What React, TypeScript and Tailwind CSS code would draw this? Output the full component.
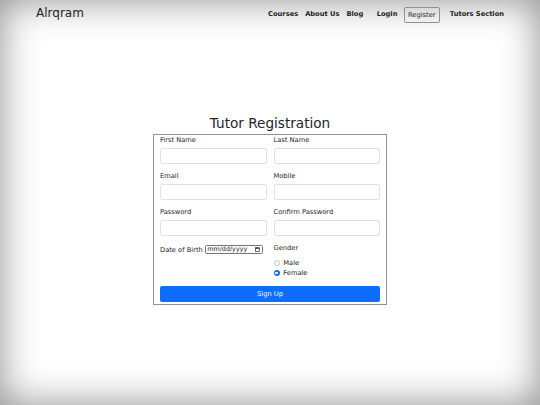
import React from "react";

const font = { fontFamily: '"DejaVu Sans", "Noto Sans", sans-serif' };

function Field({ label }: { label: string }) {
  return (
    <div className="flex flex-col">
      <div className="text-[6.7px] leading-[10px] text-[#212529]">{label}</div>
      <div className="mt-[3px] h-[16px] rounded-[2px] border border-[#dee2e6] bg-white" />
      <div className="h-[7px]" />
    </div>
  );
}

export default function App() {
  return (
    <div
      className="relative h-[405px] w-[540px] overflow-hidden bg-white text-[#212529] shadow-[inset_0_0_38px_rgba(0,0,0,0.45)]"
      style={font}
    >
      {/* Navbar */}
      <div className="flex h-[28px] items-start justify-between pl-[36px] pr-[36px]">
        <div className="text-[12px] leading-[26px] text-[#212529]">Alrqram</div>
        <div className="flex items-start text-[6.7px] font-bold text-[#212529]">
          <span className="mt-[9px] leading-[10px]">Courses</span>
          <span className="ml-[7px] mt-[9px] leading-[10px]">About Us</span>
          <span className="ml-[7px] mt-[9px] leading-[10px]">Blog</span>
          <span className="ml-[13.5px] mt-[9px] leading-[10px]">Login</span>
          <span className="ml-[6.6px] mt-[7px] h-[16px] rounded-[2px] border border-[#8f8f8f] px-[3px] font-normal leading-[14px]">
            Register
          </span>
          <span className="ml-[10.3px] mt-[9px] leading-[10px]">Tutors Section</span>
        </div>
      </div>

      {/* Title */}
      <div className="mt-[87px] text-center text-[13.6px] leading-[17px] text-[#212529]">
        Tutor Registration
      </div>

      {/* Form box */}
      <div className="mx-auto mt-[2px] w-[234px] border border-[#939393] px-[6px] pb-[2px]">
        <div className="grid grid-cols-2 gap-x-[7px]">
          <Field label="First Name" />
          <Field label="Last Name" />
          <Field label="Email" />
          <Field label="Mobile" />
          <Field label="Password" />
          <Field label="Confirm Password" />
          <div className="flex h-[13px] items-center text-[6.7px]">
            <span className="leading-[10px]">Date of Birth</span>
            <div className="ml-[2px] flex h-[9.5px] w-[58px] items-center justify-between rounded-[1.5px] border border-[#767676] bg-white pl-[1.5px] pr-[1.5px]">
              <span className="text-[6.4px] leading-[7px] text-[#212529]">mm/dd/yyyy</span>
              <svg width="5" height="5" viewBox="0 0 10 10">
                <rect x="1" y="1.5" width="8" height="7.5" fill="none" stroke="#222" strokeWidth="1.3" />
                <rect x="1" y="1.5" width="8" height="2" fill="#222" />
              </svg>
            </div>
          </div>
          <div className="flex flex-col text-[6.7px]">
            <div className="leading-[10px]">Gender</div>
            <div className="mt-[4.5px] flex h-[10.5px] items-center">
              <span className="h-[6.3px] w-[6.3px] rounded-full border border-[#c8c8c8] bg-white" />
              <span className="ml-[3.5px] leading-[10px]">Male</span>
            </div>
            <div className="flex h-[10.5px] items-center">
              <span className="flex h-[6.3px] w-[6.3px] items-center justify-center rounded-full bg-[#0d6efd]">
                <span className="h-[2.4px] w-[2.4px] rounded-full bg-white" />
              </span>
              <span className="ml-[3.5px] leading-[10px]">Female</span>
            </div>
          </div>
        </div>
        <div className="mt-[7.5px] flex h-[16px] items-center justify-center rounded-[2px] bg-[#0d6efd] text-[6.7px] text-white">
          Sign Up
        </div>
      </div>
    </div>
  );
}
